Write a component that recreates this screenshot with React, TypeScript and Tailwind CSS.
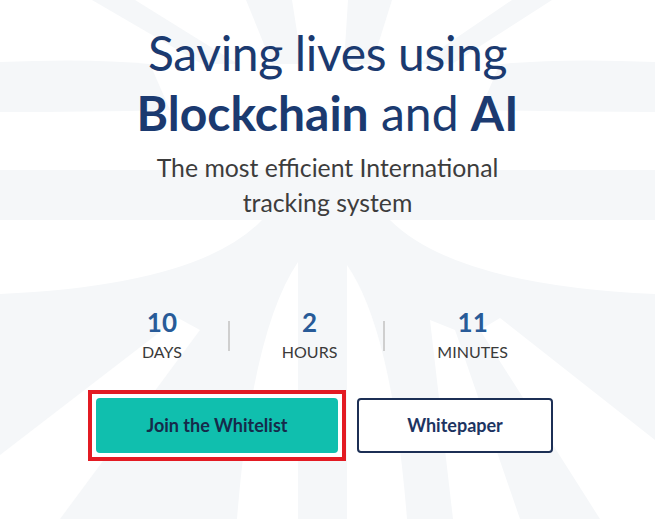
import React from "react"

const countdown = [
  { value: "10", label: "DAYS" },
  { value: "2", label: "HOURS" },
  { value: "11", label: "MINUTES" },
]

// faint background rays behind the hero
function Backdrop() {
  const gray = "#f5f7f9"
  return (
    <svg
      className="absolute inset-0 h-full w-full"
      viewBox="0 0 655 519"
      preserveAspectRatio="none"
      aria-hidden="true"
    >
      {/* rays at the top */}
      <path d="M92 0 L135 0 L238 64 L202 64 Z" fill={gray} />
      <path d="M246 0 L292 0 L302 64 L272 64 Z" fill={gray} />
      <path d="M348 0 L392 0 L372 64 L344 64 Z" fill={gray} />
      <path d="M512 0 L552 0 L452 64 L418 64 Z" fill={gray} />
      {/* side bands */}
      <path d="M0 62 Q90 58 150 64 L170 110 Q90 112 0 112 Z" fill={gray} />
      <path d="M655 62 Q565 58 500 64 L480 110 Q565 112 655 112 Z" fill={gray} />
      <path d="M0 170 L655 170 L655 220 L0 220 Z" fill={gray} />
      {/* lower arch */}
      <path d="M0 294 Q200 285 262 220 L390 220 Q455 285 655 294 L655 519 L0 519 Z" fill={gray} />
      {/* white rays in the lower part */}
      <path d="M298 262 L298 519 L237 519 Q252 330 298 262 Z" fill="#ffffff" />
      <path d="M347 265 L347 519 L407 519 Q392 330 347 265 Z" fill="#ffffff" />
      <path d="M0 455 L0 519 L60 519 L200 330 L178 318 Z" fill="#ffffff" />
      <path d="M453 519 L520 519 L455 330 L430 320 Z" fill="#ffffff" />
      <path d="M655 440 L655 519 L600 519 L480 330 L500 318 Z" fill="#ffffff" />
    </svg>
  )
}

export default function App() {
  return (
    <div className="relative min-h-[519px] w-full overflow-hidden bg-white font-['Lato',sans-serif]">
      <Backdrop />

      <div className="relative flex flex-col items-center pt-[23px]">
        <h1 className="text-center text-[48px] leading-[60px] font-normal text-[#1b3a70]">
          <span className="tracking-[-0.35px]">Saving lives using</span>
          <br />
          <span className="font-bold">Blockchain</span> and <span className="font-bold">AI</span>
        </h1>

        <p className="mt-[7px] max-w-[390px] text-center text-[24.8px] leading-[35px] text-[#3d3d3d]">
          The most efficient International tracking system
        </p>

        {/* Countdown */}
        <div className="mt-[87px] mr-[5px] flex items-center">
          {countdown.map((item, i) => (
            <div key={item.label} className="flex items-center">
              {i > 0 && <div className="mr-[52px] ml-[46px] h-[30px] w-[2px] bg-[#cfcfcf]" />}
              <div className="flex flex-col items-center">
                <span className="text-[26px] leading-[31px] font-bold text-[#285b98]">{item.value}</span>
                <span className="text-[16px] leading-[27px] text-[#3a3a3a]">{item.label}</span>
              </div>
            </div>
          ))}
        </div>

        {/* Actions */}
        <div className="mt-[33px] mr-[6px] flex items-center gap-[19px]">
          <div className="-m-2 border-4 border-[#e31b23] bg-white p-1">
            <button className="h-[55px] w-[242px] rounded-[4px] bg-[#10bfae] text-[18px] font-bold text-[#162a4a]">
              Join the Whitelist
            </button>
          </div>
          <button className="h-[55px] w-[196px] rounded-[4px] border-2 border-[#1c2f55] bg-white text-[18px] font-bold text-[#1d3462]">
            Whitepaper
          </button>
        </div>
      </div>
    </div>
  )
}
